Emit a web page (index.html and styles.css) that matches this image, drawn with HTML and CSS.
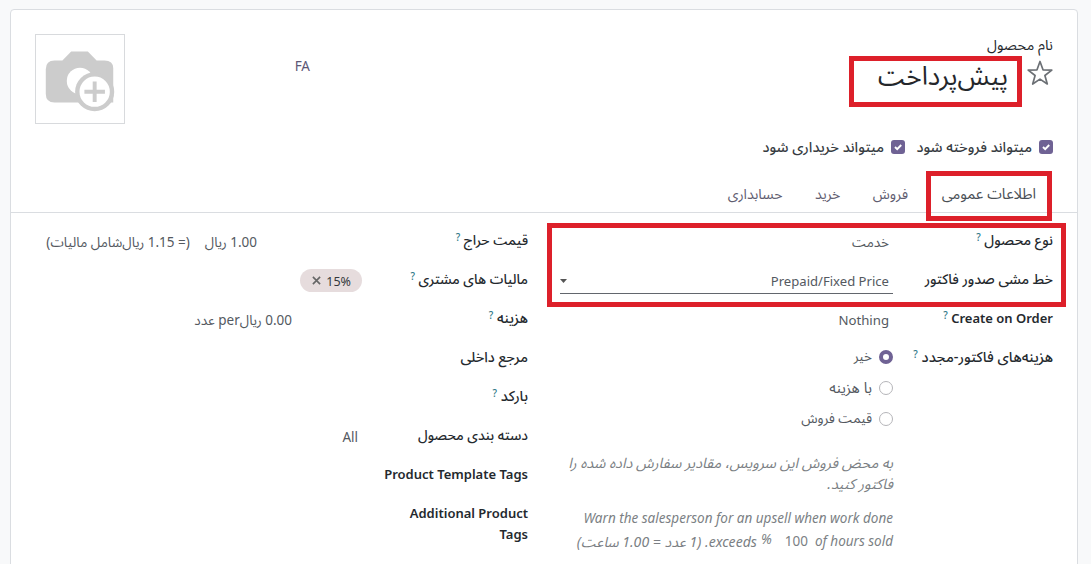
FILE: index.html
```html
<!DOCTYPE html>
<html lang="fa" dir="rtl">
<head>
<meta charset="utf-8">
<title>پیش‌پرداخت</title>
<link rel="stylesheet" href="styles.css">
</head>
<body>
<main class="sheet">
  <header class="head">
    <div class="title-block">
      <label class="name-label">نام محصول</label>
      <div class="title-row">
        <svg class="star" viewBox="0 0 26 26"><path d="M13 1.500l3 8.300 8.800.3-6.900 5.400 2.400 8.500-7.300-4.900-7.300 4.900 2.400-8.500-6.900-5.400 8.800-.3z" fill="none" stroke="#6c7075" stroke-width="1.700" stroke-linejoin="round"/></svg>
        <h1 class="name">پیش‌پرداخت</h1>
        <span class="mark mark-name"></span>
      </div>
    </div>
    <span class="lang">FA</span>
    <div class="photo">
      <svg viewBox="0 0 90 90"><path d="M27 26l9-9h17l9 9h8q9 0 9 8v35H19q-9 0-9-9V35q0-9 9-9z" fill="#ccc"/><circle cx="45" cy="47" r="13.500" fill="#fff"/><circle cx="60" cy="58" r="20" fill="#ccc"/><circle cx="60" cy="58" r="15.500" fill="#fff"/><path d="M60 47.500v21M49.500 58h21" stroke="#ccc" stroke-width="4"/></svg>
    </div>
  </header>
  <div class="options">
    <span class="check"><svg viewBox="0 0 14 14"><path d="M4 7l2.200 2.200L10.200 5" fill="none" stroke="#fff" stroke-width="1.900"/></svg></span><span class="opt opt-sale">میتواند فروخته شود</span>
    <span class="check"><svg viewBox="0 0 14 14"><path d="M4 7l2.200 2.200L10.200 5" fill="none" stroke="#fff" stroke-width="1.900"/></svg></span><span class="opt opt-buy">میتواند خریداری شود</span>
  </div>
  <nav class="tabs">
    <a class="tab active">اطلاعات عمومی<span class="mark mark-tab"></span></a>
    <a class="tab">فروش</a>
    <a class="tab">خرید</a>
    <a class="tab">حسابداری</a>
  </nav>
  <div class="groups">
    <section class="group main">
      <span class="mark mark-fields"></span>
      <div class="row"><label class="label">نوع محصول <sup>?</sup></label><span class="value">خدمت</span></div>
      <div class="row"><label class="label">خط مشی صدور فاکتور</label><span class="value select"><span>Prepaid/Fixed Price</span><i class="caret"></i></span></div>
      <div class="row"><label class="label en">Create on Order <sup>?</sup></label><span class="value nothing">Nothing</span></div>
      <div class="row radios"><label class="label rebill">هزینه‌های فاکتور-مجدد <sup>?</sup></label>
        <div class="radio-list">
          <span class="radio"><i class="dot on"></i>خیر</span>
          <span class="radio wide"><i class="dot"></i>با هزینه</span>
          <span class="radio"><i class="dot"></i>قیمت فروش</span>
        </div>
      </div>
      <div class="help">
        <p class="help-fa">به محض فروش این سرویس، مقادیر سفارش داده شده را<br>فاکتور کنید.</p>
        <p class="help-en">Warn the salesperson for an upsell when work done</p>
        <p class="help-en calc"><span>of hours sold</span><span class="num">100</span><span class="pct">%</span><span class="ratio">exceeds. (1 عدد = 1.00 ساعت)</span></p>
      </div>
    </section>
    <section class="group side">
      <div class="row"><label class="label">قیمت حراج <sup>?</sup></label><span class="value price"><span>1.00 ریال</span><span>(= 1.15 ریال‌شامل مالیات)</span></span></div>
      <div class="row"><label class="label">مالیات های مشتری <sup>?</sup></label><span class="tag"><bdi dir="ltr">15%</bdi><svg viewBox="0 0 10 10"><path d="M1 1l8 8M9 1l-8 8" stroke="#666" stroke-width="1.800"/></svg></span></div>
      <div class="row"><label class="label cost-label">هزینه <sup>?</sup></label><span class="value cost">0.00 ریال‌per عدد</span></div>
      <div class="row"><label class="label ref-label">مرجع داخلی</label></div>
      <div class="row"><label class="label cost-label">بارکد <sup>?</sup></label></div>
      <div class="row"><label class="label">دسته بندی محصول</label><span class="value categ">All</span></div>
      <div class="row"><label class="label en">Product Template Tags</label></div>
      <div class="row"><label class="label en">Additional Product<br>Tags</label></div>
    </section>
  </div>
</main>
</body>
</html>
```
FILE: styles.css
```css
* { box-sizing: border-box; }
body { margin: 0; height: 564px; overflow: hidden; padding: 9px 13px 0 10px; background: #f8f9fa; color: #54595f; font: 13.5px/21px "Noto Sans", "Noto Sans Arabic", "DejaVu Sans", sans-serif; }
.sheet { height: 570px; border: 1px solid #dadde1; border-radius: 4px; background: #fff; }
.head { display: flex; height: 124px; padding: 24px 24px 0; }
.title-block { width: 240px; }
.name-label { display: block; height: 22px; color: #24292e; font-size: 14.4px; }
.title-row { position: relative; display: flex; align-items: center; height: 38px; }
.star { width: 26px; height: 26px; margin-top: -5px; }
.name { margin: 0 19px 0 0; font-size: 26px; line-height: 38px; font-weight: 400; color: #24272b; white-space: nowrap; }
.mark { position: absolute; border: 5px solid #dd202a; }
.mark-name { right: 31px; top: 0; width: 173px; height: 51px; }
.lang { margin-right: 503px; margin-top: 22px; color: #5c5777; }
.photo { width: 90px; height: 90px; margin-right: auto; border: 1px solid #d8dadd; }
.photo svg { display: block; width: 88px; height: 88px; }
.options { display: flex; align-items: center; height: 25px; padding-right: 24px; color: #373c42; font-size: 14.4px; font-weight: 500; }
.check { flex: none; width: 14px; height: 14px; border-radius: 3px; background: #6f6294; }
.check svg { display: block; }
.opt { margin-right: 7px; white-space: nowrap; }
.opt-sale { width: 127px; }
.tabs { display: flex; height: 42px; margin-top: 12px; padding-right: 25px; border-bottom: 1px solid #dadde1; color: #5f5d70; font-size: 14.1px; }
.tab { position: relative; padding: 12px 14px 0 18.500px; white-space: nowrap; }
.tab.active { flex: none; width: 130px; padding-right: 16px; color: #4a4f55; font-size: 14.8px; }
.mark-tab { right: 0; top: 0; width: 126px; height: 50px; }
.groups { display: flex; padding: 17px 24px 0; }
.group { width: 494px; }
.main { position: relative; }
.side { margin-right: 32px; }
.mark-fields { right: -13px; top: -7px; width: 519px; height: 84px; }
.row { display: flex; height: 39px; }
.label { flex: none; width: 160px; margin-top: -1px; color: #24292e; font-size: 14px; font-weight: 500; white-space: nowrap; }
.rebill { font-size: 14.5px; }
.side .label { font-size: 13.7px; }
.side .cost-label { font-size: 14.4px; }
.side .ref-label { font-size: 14.3px; }
.row .label.en { margin-top: 0; font-size: 13px; font-weight: 600; }
sup { font-size: 10px; line-height: 0; color: #2f7888; font-weight: 500; vertical-align: 4px; }
.value { display: flex; height: 30px; padding: 2px 4px 0; white-space: nowrap; }
.nothing { font-size: 13.2px; }
.select { width: 333px; height: 29px; margin-top: -4px; padding: 6px 4px 0 0; justify-content: space-between; border-bottom: 1px solid #62666d; font-size: 13.1px; }
.caret { margin: 8px 0 0 0; width: 7px; height: 4px; background: #555; clip-path: polygon(0 0, 100% 0, 50% 100%); }
.radios { height: 104px; }
.radio-list { display: flex; flex-direction: column; gap: 10px; margin-top: -1px; }
.radio { display: flex; align-items: center; gap: 7px; height: 21px; }
.wide { font-size: 14.8px; }
.dot { width: 14px; height: 14px; border: 1px solid #b5b5b9; border-radius: 50%; }
.dot.on { border: 4px solid #6f6294; }
.help { width: 333px; margin: 1px 160px 0 0; font-style: italic; color: #7b7f84; white-space: nowrap; }
.help p { margin: 0; }
.help .help-fa { font-size: 14.5px; }
.help .help-en { margin-top: 14px; }
.help .calc { display: flex; margin-top: 2px; }
.num { margin-right: 7px; font-style: normal; }
.pct { margin: -2px 13px 0 4px; }
.ratio { font-size: 14.1px; }
.price { margin-right: 107px; gap: 15px; }
.tag { display: flex; align-items: center; gap: 5px; width: 62px; height: 23px; margin: 0 6px 0 0; padding: 2px 11px 0; border-radius: 12px; background: #e6dcdd; color: #34383c; font-size: 12.5px; }
.tag svg { width: 9px; height: 9px; margin-top: -2px; }
.cost { margin-right: 72px; }
.categ { margin-right: 6px; }
```
